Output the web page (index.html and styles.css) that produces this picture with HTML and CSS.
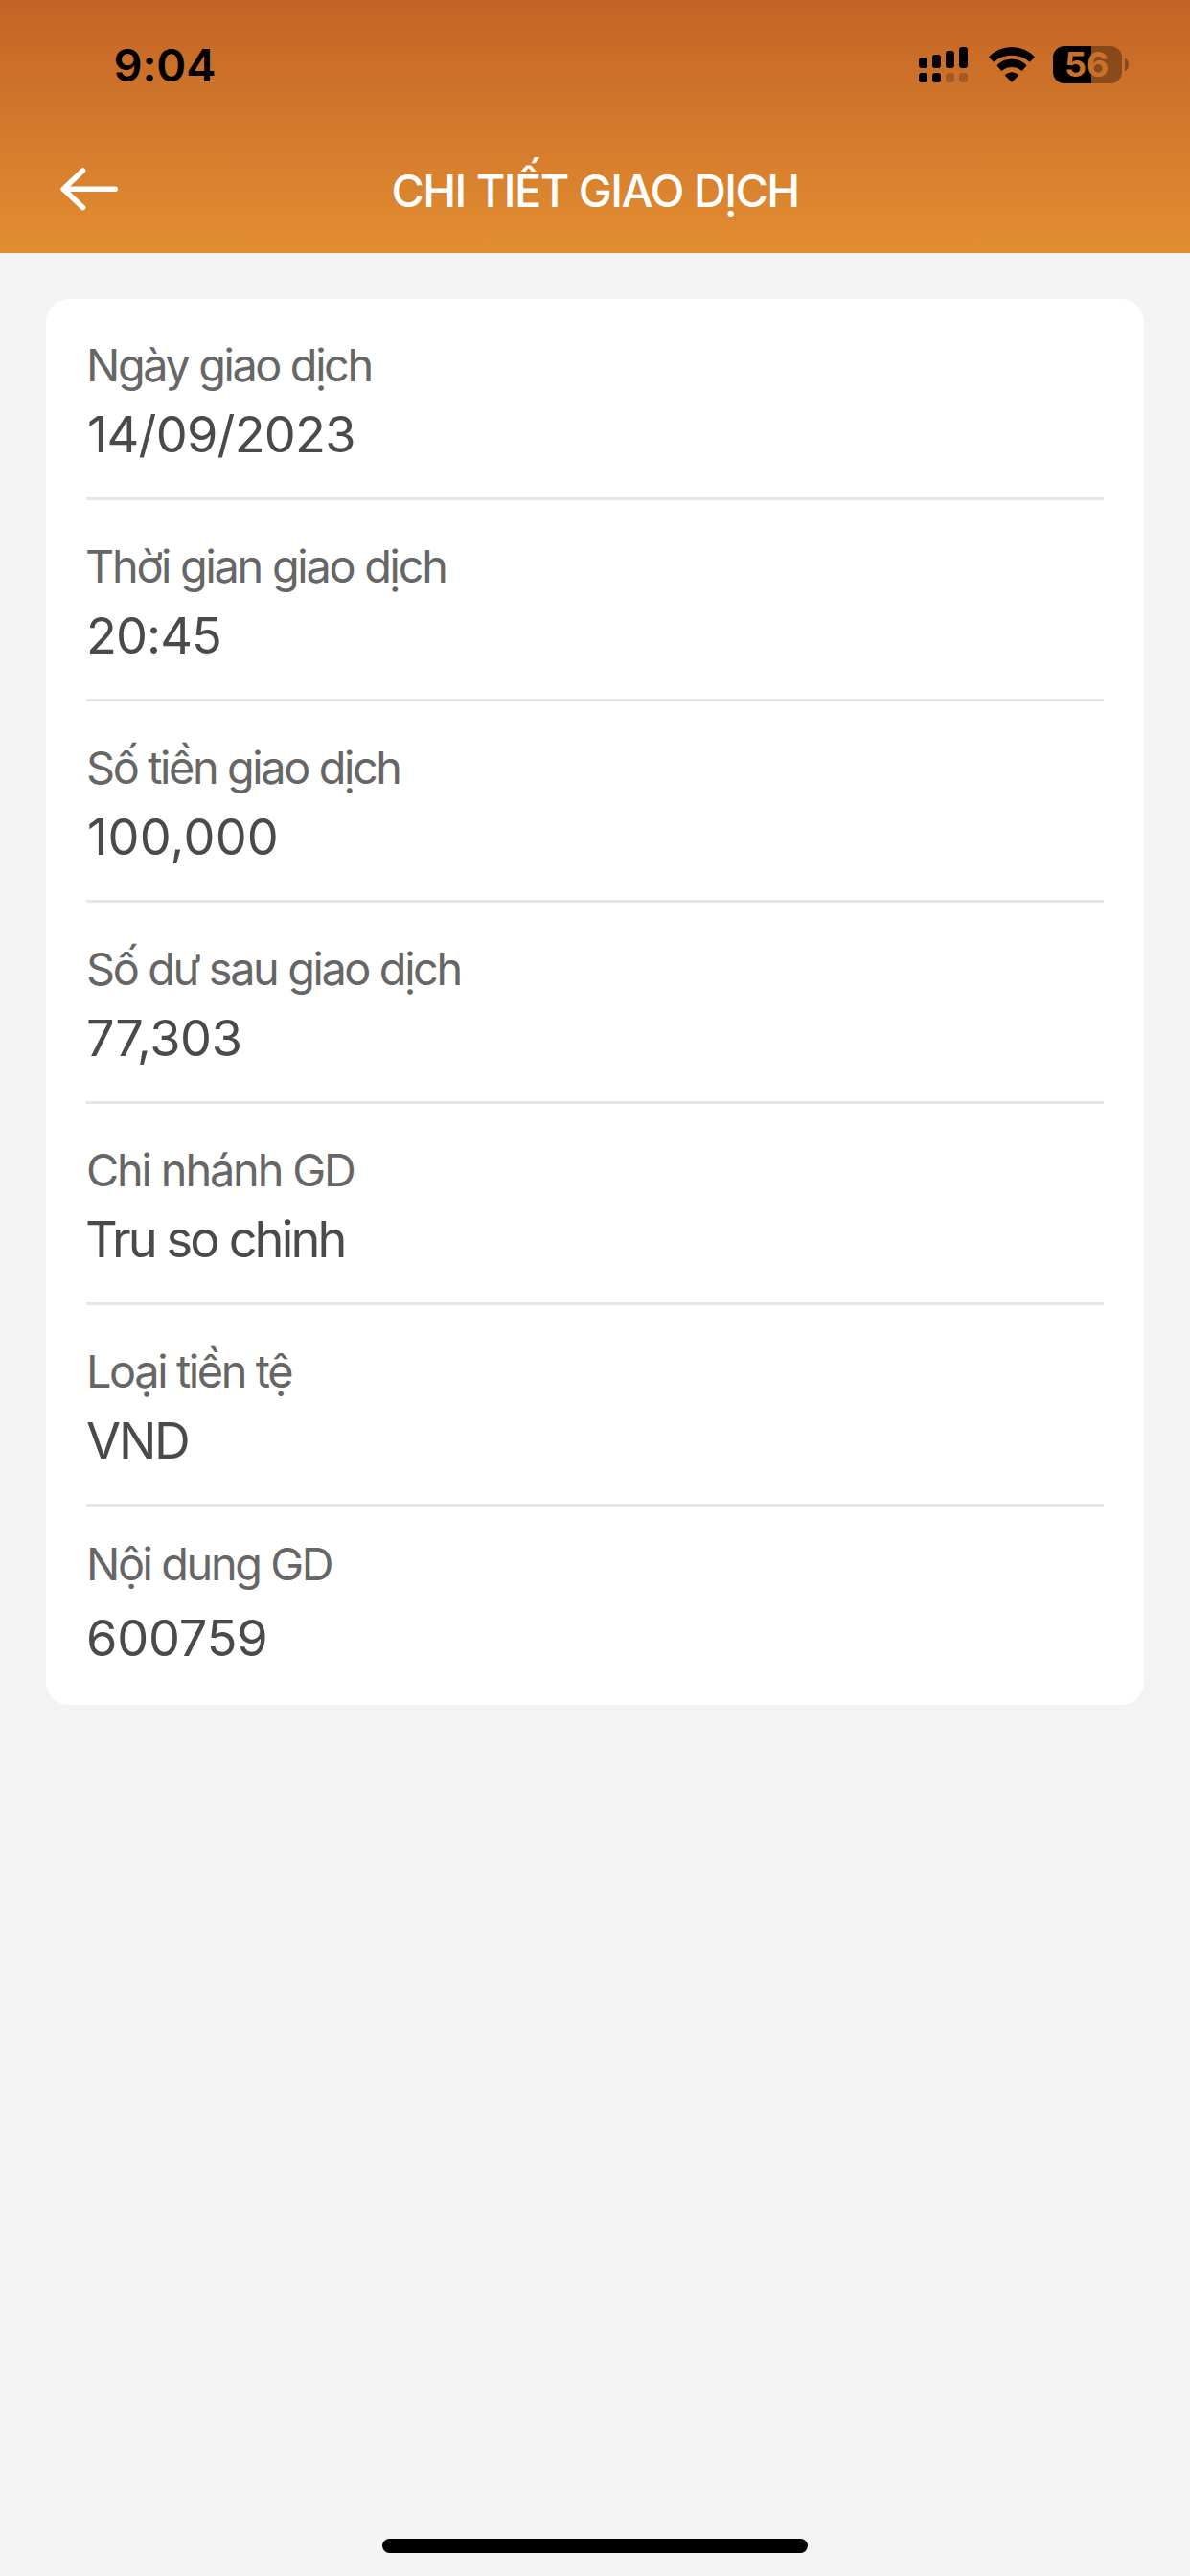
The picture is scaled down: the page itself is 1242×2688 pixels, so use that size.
FILE: index.html
```html
<!DOCTYPE html>
<html lang="vi">
<head>
<meta charset="utf-8">
<meta name="viewport" content="width=device-width">
<title>Chi tiết giao dịch</title>
<link rel="stylesheet" href="styles.css">
</head>
<body>
<div class="screen">
  <header class="header">
    <div class="status">
      <time class="clock">9:04</time>
      <div class="indicators">
        <svg class="signal" viewBox="0 0 51 37" width="51" height="37" aria-hidden="true">
          <rect x="0" y="11" width="9" height="11" rx="3"/>
          <rect x="14" y="8" width="9" height="14" rx="3"/>
          <rect x="28" y="4" width="9" height="18" rx="3"/>
          <rect x="42" y="0" width="9" height="22" rx="3"/>
          <rect x="0" y="27" width="9" height="10" rx="3"/>
          <rect x="14" y="27" width="9" height="10" rx="3"/>
          <rect x="28" y="27" width="9" height="10" rx="3" opacity=".2"/>
          <rect x="42" y="27" width="9" height="10" rx="3" opacity=".2"/>
        </svg>
        <svg class="wifi" viewBox="0 0 48 37" width="48" height="37" aria-hidden="true">
          <path d="M.6 9.8a33 33 0 0 1 46.8 0q.5.6 0 1.2l-4 4.200q-.6.5-1.200 0a29 29 0 0 0-36.400 0q-.6.5-1.200 0l-4-4.200q-.5-.6 0-1.200z"/>
          <path d="M8.900 18.700a21.500 21.500 0 0 1 30.200 0q.6.600 0 1.300l-4 4.400q-.6.500-1.300 0a16 16 0 0 0-19.600 0q-.7.500-1.300 0l-4-4.400q-.6-.7 0-1.300z"/>
          <path d="M17.200 28.800a10.200 10.200 0 0 1 13.600 0q.6.600 0 1.200l-6.200 6.200q-.6.500-1.200 0l-6.200-6.200q-.6-.6 0-1.200z"/>
        </svg>
        <div class="battery"><span class="charge">56</span></div>
      </div>
    </div>
    <div class="nav">
      <svg class="back" viewBox="0 0 60 45" width="60" height="45" aria-label="Quay lại">
        <path d="M23.500 3 3.200 22.200 23.500 41.500M3.200 22.200H57.200"/>
      </svg>
      <h1 class="title">CHI TIẾT GIAO DỊCH</h1>
    </div>
  </header>
  <main class="content">
    <dl class="card">
      <div class="row"><dt>Ngày giao dịch</dt><dd class="date">14/09/2023</dd></div>
      <div class="row"><dt class="time-label">Thời gian giao dịch</dt><dd class="hour">20:45</dd></div>
      <div class="row"><dt>Số tiền giao dịch</dt><dd class="amount">100,000</dd></div>
      <div class="row"><dt>Số dư sau giao dịch</dt><dd class="balance">77,303</dd></div>
      <div class="row"><dt class="branch-label">Chi nhánh GD</dt><dd class="branch">Tru so chinh</dd></div>
      <div class="row"><dt>Loại tiền tệ</dt><dd class="currency">VND</dd></div>
      <div class="row"><dt>Nội dung GD</dt><dd class="note">600759</dd></div>
    </dl>
  </main>
  <div class="home-bar"></div>
</div>
</body>
</html>
```

FILE: styles.css
```css
* { box-sizing: border-box; margin: 0; padding: 0; }

body {
  background: #f3f3f3;
  font-family: Inter, "Liberation Sans", sans-serif;
}

.screen {
  display: flex;
  flex-direction: column;
  height: 2688px;
  background: #f3f3f3;
}

/* Header */
.header {
  height: 264px;
  background: linear-gradient(#c36426, #e28e32);
}

.status {
  display: flex;
  justify-content: space-between;
  align-items: center;
  height: 135px;
  padding: 0 64px 0 118.500px;
  color: #000;
}

.clock {
  font-size: 47px;
  font-weight: 600;
  line-height: 56px;
  letter-spacing: -.1px;
}

.indicators { display: flex; align-items: center; }

.wifi { margin: 0 19px 0 22px; }

.battery {
  position: relative;
  width: 72px;
  height: 39px;
  margin-right: 7px;
  border-radius: 12px;
  background: linear-gradient(90deg, #000 40px, rgba(0, 0, 0, .33) 40px);
}

.battery::after {
  content: "";
  position: absolute;
  left: 75px;
  top: 13px;
  width: 4px;
  height: 13px;
  border-radius: 0 4px 4px 0 / 0 6.500px 6.500px 0;
  background: rgba(0, 0, 0, .33);
}

.charge {
  display: block;
  padding-left: 12px;
  font-size: 36px;
  font-weight: 700;
  line-height: 39px;
  color: #cb7029;
}

.nav {
  display: grid;
  grid-template-columns: 60px 1fr 60px;
  align-items: center;
  height: 129px;
  padding: 0 63px;
}

.back {
  margin-top: -5px;
  fill: none;
  stroke: #fff;
  stroke-width: 5.600;
  stroke-linecap: round;
  stroke-linejoin: round;
}

.title {
  margin-top: -2px;
  color: #fff;
  font-size: 46.800px;
  font-weight: 500;
  line-height: 64px;
  letter-spacing: -1.500px;
  text-align: center;
  white-space: nowrap;
}

/* Transaction details */
.content { flex: 1; padding: 48px; }

.card {
  border-radius: 24px;
  background: #fff;
  padding: 0 42px;
}

.row {
  height: 210px;
  padding-top: 41px;
  border-bottom: 3px solid #e3e6ea;
}

dt {
  color: #666;
  font-size: 46.800px;
  line-height: 56px;
  letter-spacing: -2.370px;
}

dd {
  margin-top: 12px;
  color: #4a4a4a;
  font-size: 52.300px;
  line-height: 64px;
}

.row:last-child { height: 207px; padding-top: 32px; border-bottom: 0; }
.row:last-child dd { margin-top: 17px; }

.time-label { letter-spacing: -2.250px; text-indent: -1px; }
.branch-label { letter-spacing: -2.120px; }
.date { letter-spacing: -.750px; text-indent: 1px; }
.hour { letter-spacing: -.930px; }
.amount { letter-spacing: .200px; text-indent: 1px; }
.balance { letter-spacing: -.380px; }
.branch { letter-spacing: -2.880px; text-indent: -1px; }
.currency { letter-spacing: -2.200px; }
.note { letter-spacing: -.200px; }

/* Home indicator */
.home-bar {
  width: 444px;
  height: 15px;
  margin: 0 auto 24px;
  border-radius: 8px;
  background: #000;
}
```
